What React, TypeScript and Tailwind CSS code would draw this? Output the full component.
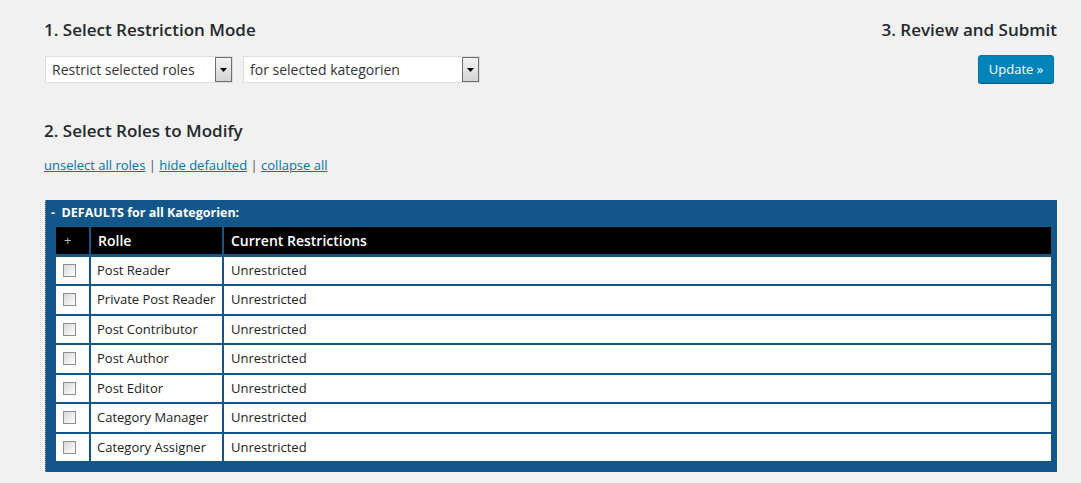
const roles = [
  'Post Reader',
  'Private Post Reader',
  'Post Contributor',
  'Post Author',
  'Post Editor',
  'Category Manager',
  'Category Assigner',
];

function FakeSelect({ label, width }: { label: string; width: string }) {
  return (
    <div className={`${width} h-[27px] bg-white border border-[#dddddd] flex items-center justify-between`}>
      <span className="pl-[6px] text-[14px] text-[#333]">{label}</span>
      <span className="h-[25px] w-[17px] border border-[#6f6f6f] bg-gradient-to-b from-[#f4f4f4] to-[#d4d4d4] flex items-center justify-center">
        <svg width="7" height="4" viewBox="0 0 7 4">
          <path d="M0 0h7L3.5 4z" fill="#000" />
        </svg>
      </span>
    </div>
  );
}

function Checkbox() {
  return (
    <span className="block w-[13px] h-[13px] border border-[#8e8e8e] bg-gradient-to-br from-[#d8d8d8] to-white" />
  );
}

export default function App() {
  return (
    <div className="min-h-screen bg-[#f1f1f1] font-['Open_Sans',sans-serif] text-[#23282d] pl-[44px] pr-[24px] pt-[19px]">
      <div className="flex justify-between">
        <div>
          <h2 className="text-[17px] font-semibold leading-[22px]">1. Select Restriction Mode</h2>
          <div className="mt-[15px] ml-px flex gap-[10px]">
            <FakeSelect label="Restrict selected roles" width="w-[188px]" />
            <FakeSelect label="for selected kategorien" width="w-[237px]" />
          </div>
        </div>
        <div className="flex flex-col items-end">
          <h2 className="text-[17px] font-semibold leading-[22px]">3. Review and Submit</h2>
          <button className="mt-[14px] mr-[3px] h-[28px] w-[76px] pt-px rounded-[3px] bg-[#0085ba] border border-[#0073aa] shadow-[0_1px_0_#006799] text-white text-[13px]">
            Update »
          </button>
        </div>
      </div>

      <h2 className="mt-[37px] text-[17px] font-semibold leading-[22px]">2. Select Roles to Modify</h2>

      <div className="mt-[14px] text-[13px] leading-[18px] text-[#555]">
        <a href="#" className="text-[#0073aa] underline">unselect all roles</a>
        {' | '}
        <a href="#" className="text-[#0073aa] underline">hide defaulted</a>
        {' | '}
        <a href="#" className="text-[#0073aa] underline">collapse all</a>
      </div>

      <div className="mt-[26px] ml-px border-l border-dotted border-[#9a9a9a] bg-[#135689] pb-[11px]">
        <div className="h-[27px] flex items-center pl-[5px] text-white text-[12.5px] font-bold">
          -&nbsp; DEFAULTS for all Kategorien:
        </div>
        <div className="ml-[10px] mr-[6px] grid grid-cols-[33px_131px_1fr] gap-[2px] auto-rows-[27.5px] text-[13px]">
          <div className="h-[27px] bg-black text-[#bbb] flex items-center pl-[8px]">+</div>
          <div className="h-[27px] bg-black text-white font-semibold text-[14px] flex items-center pl-[7px]">Rolle</div>
          <div className="h-[27px] bg-black text-white font-semibold text-[14px] flex items-center pl-[7px]">Current Restrictions</div>
          {roles.map((r) => (
            <div key={r} className="contents">
              <div className="bg-white flex items-center pl-[7px]">
                <Checkbox />
              </div>
              <div className="bg-white flex items-center pl-[6px] text-[#222]">{r}</div>
              <div className="bg-white flex items-center pl-[7px] text-[#222]">Unrestricted</div>
            </div>
          ))}
        </div>
      </div>
    </div>
  );
}
